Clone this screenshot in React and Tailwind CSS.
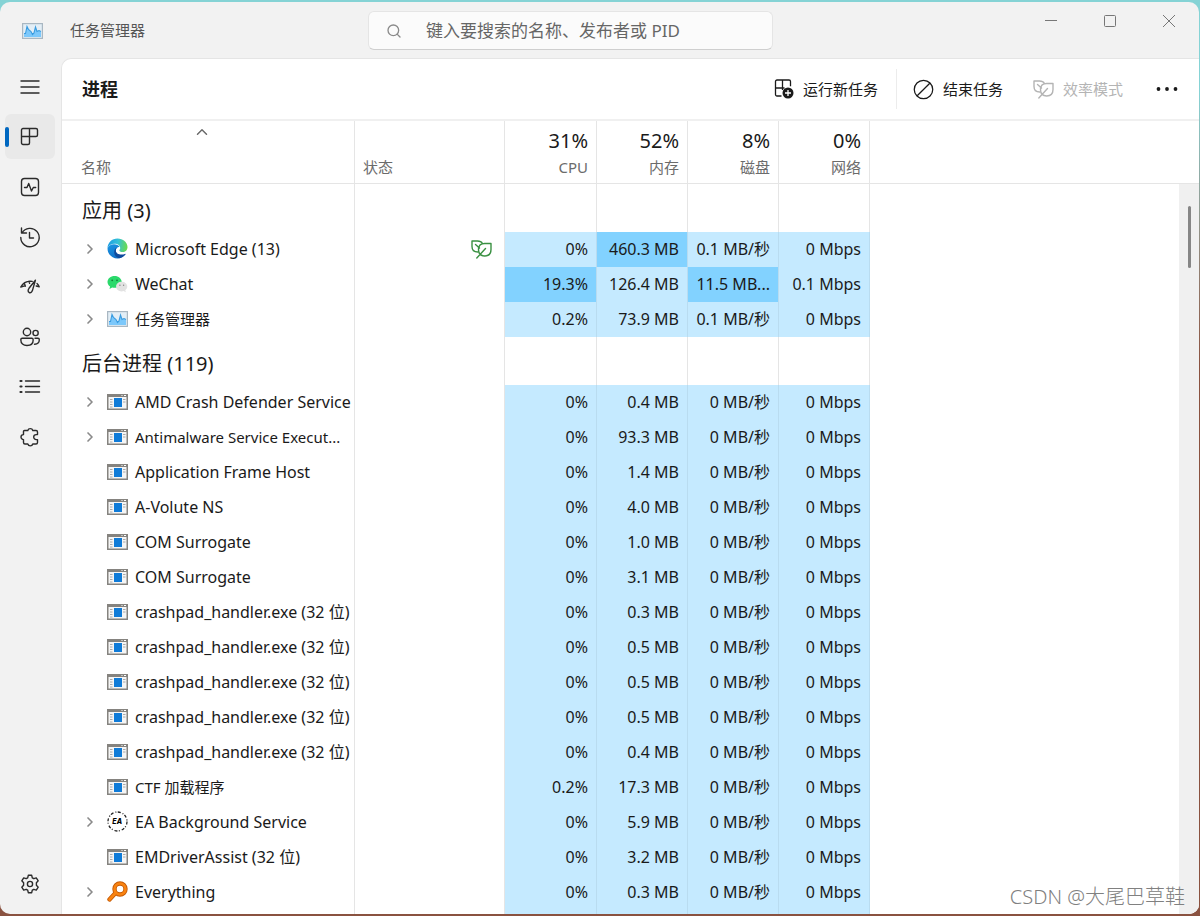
import { Fragment, useState } from "react";
import { ChevronRight, ChevronUp, Search } from "lucide-react";

const heat = {
  low: "bg-[#c5eaff]",
  high: "bg-[#82d2ff]",
};

const apps = [
  { name: "Microsoft Edge (13)", icon: "edge", open: true, eco: true, cpu: "0%", mem: "460.3 MB", disk: "0.1 MB/秒", net: "0 Mbps", hot: ["mem"] },
  { name: "WeChat", icon: "wechat", open: true, cpu: "19.3%", mem: "126.4 MB", disk: "11.5 MB...", net: "0.1 Mbps", hot: ["cpu", "disk"] },
  { name: "任务管理器", icon: "taskmgr", small: true, open: true, cpu: "0.2%", mem: "73.9 MB", disk: "0.1 MB/秒", net: "0 Mbps" },
];

const idle = { cpu: "0%", disk: "0 MB/秒", net: "0 Mbps", icon: "exe" };

const background = [
  { ...idle, name: "AMD Crash Defender Service", open: true, mem: "0.4 MB" },
  { ...idle, name: "Antimalware Service Execut...", small: true, open: true, mem: "93.3 MB" },
  { ...idle, name: "Application Frame Host", mem: "1.4 MB" },
  { ...idle, name: "A-Volute NS", mem: "4.0 MB" },
  { ...idle, name: "COM Surrogate", mem: "1.0 MB" },
  { ...idle, name: "COM Surrogate", mem: "3.1 MB" },
  { ...idle, name: "crashpad_handler.exe (32 位)", mem: "0.3 MB" },
  { ...idle, name: "crashpad_handler.exe (32 位)", mem: "0.5 MB" },
  { ...idle, name: "crashpad_handler.exe (32 位)", mem: "0.5 MB" },
  { ...idle, name: "crashpad_handler.exe (32 位)", mem: "0.5 MB" },
  { ...idle, name: "crashpad_handler.exe (32 位)", mem: "0.4 MB" },
  { ...idle, name: "CTF 加载程序", small: true, cpu: "0.2%", mem: "17.3 MB" },
  { ...idle, name: "EA Background Service", icon: "ea", open: true, mem: "5.9 MB" },
  { ...idle, name: "EMDriverAssist (32 位)", mem: "3.2 MB" },
  { ...idle, name: "Everything", icon: "everything", open: true, mem: "0.3 MB" },
];

const groups = [
  { title: "应用 (3)", rows: apps },
  { title: "后台进程 (119)", rows: background },
];

const columns = [
  { key: "cpu", label: "CPU", total: "31%" },
  { key: "mem", label: "内存", total: "52%" },
  { key: "disk", label: "磁盘", total: "8%" },
  { key: "net", label: "网络", total: "0%" },
];

// sidebar glyphs, all on a 20x20 grid
const glyphs = {
  menu: <path d="M1 4h18M1 10h18M1 16h18" />,
  processes: (
    <path d="M3 1.5h13A1.5 1.5 0 0 1 17.5 3v5A1.5 1.5 0 0 1 16 9.5H9.5V16A1.5 1.5 0 0 1 8 17.5H3A1.5 1.5 0 0 1 1.5 16V3A1.5 1.5 0 0 1 3 1.5zM9.5 1.5v8M1.5 9.5h8" />
  ),
  performance: (
    <>
      <rect x="1.5" y="1.5" width="17" height="17" rx="3" />
      <path d="M4.5 10.5H7l1.7-4 2.8 7.500 1.800-3.500h2.400" />
    </>
  ),
  history: <path d="M1.500 1v5h5M2 6A9.200 9.200 0 1 1 .8 10.500M9.500 5.500V11h4" />,
  startup: (
    <>
      <path d="M.8 10C3.200 5.600 7 3.800 12.200 4.400M.8 10l3.800-1.200M4.400 6.400l1 2.800M9 4.200l.6 2.200M17 6.600c.9.8 1.600 1.800 2.200 3.200l-3-.8" />
      <path d="M15.400 3.200 9 11.300c-1.200 1.600-1.200 3.400.2 4.200 1.400.7 2.600-.2 3.200-1.900z" />
    </>
  ),
  users: (
    <>
      <circle cx="7" cy="5" r="3.7" />
      <circle cx="15.6" cy="6" r="2.6" />
      <path d="M2.200 11.300h9.600c.8 0 1.400.6 1.400 1.400 0 3.800-2.500 5.800-6.200 5.800S.8 16.500.8 12.700c0-.8.6-1.400 1.400-1.400zM15 11.300h3c.8 0 1.300.6 1.300 1.400 0 3-1.600 4.600-4.800 4.500" />
    </>
  ),
  details: (
    <>
      <path d="M5.500 4h14M5.500 9.500h14M5.500 15h14" />
      <path d="M.5 4h1M.5 9.500h1M.5 15h1" strokeWidth="2.2" />
    </>
  ),
  services: (
    <path d="M4.500 3.500h3.300a2.600 2.600 0 0 1 5 0H16A1.500 1.500 0 0 1 17.500 5v2.600h-1.300a2.500 2.500 0 0 0 0 5h1.300v2.900A1.500 1.500 0 0 1 16 17h-3.200a2.600 2.600 0 0 1-5 0H5A1.500 1.500 0 0 1 3.500 15.500v-2.900a2.500 2.500 0 0 1 0-5V4.500a1 1 0 0 1 1-1z" />
  ),
  settings: (
    <>
      <circle cx="10" cy="10" r="2.600" />
      <path d="M8.300 1.300h3.400l.6 2.500 1.600.9 2.400-.8 1.900 2.900-1.800 1.900v2.600l1.800 1.900-1.900 2.900-2.400-.8-1.600.9-.6 2.500H8.300l-.6-2.500-1.600-.9-2.400.8-1.900-2.900 1.800-1.900V8.700L1.800 6.800l1.900-2.900 2.400.8 1.600-.9z" />
    </>
  ),
};

function Glyph({ name }) {
  return (
    <svg viewBox="0 0 20 20" className="size-5 overflow-visible" fill="none" stroke="currentColor" strokeWidth="1.4" strokeLinejoin="round" strokeLinecap="round">
      {glyphs[name]}
    </svg>
  );
}

function LeafIcon() {
  return (
    <svg viewBox="0 0 21 19" className="h-[19px] w-[21px]" fill="none" stroke="currentColor" strokeWidth="1.4" strokeLinejoin="round" strokeLinecap="round">
      <path d="M11.500 3.500C10.500 1.800 8.700 1 6.500 1H1v5.500C1 10 3 12 6.800 12M4.500 4.500l4 3.500" />
      <path d="M20 3.500h-6.400c-3.900 0-6.100 2.300-6.100 6.100 0 4 2.300 6.400 6.200 6.400 4 0 6.300-2.400 6.300-6.400zM14.500 8.500 5.800 18" />
    </svg>
  );
}

function TaskManagerIcon() {
  return (
    <svg viewBox="0 0 21 16" className="h-4 w-[21px]">
      <rect x=".6" y=".6" width="19.800" height="14.800" fill="#e3eef6" stroke="#a9b7c2" strokeWidth="1.200" />
      <path d="M2 14v-3.500h1.500L5 3.500l1.500 3L9 8.500l1.500 3L12 10l1.500-6 1.500 4.500 2-1 2 1V14z" fill="#7cc8fb" />
      <path d="M2 10.500h1.500L5 3.500l1.500 3L9 8.500l1.500 3L12 10l1.500-6 1.500 4.500 2-1 2 1" fill="none" stroke="#3a9ce0" strokeWidth="1.100" />
    </svg>
  );
}

function ExeIcon() {
  return (
    <svg viewBox="0 0 21 16" className="h-4 w-[21px]">
      <rect x=".75" y=".75" width="19.500" height="14.500" fill="#f5f5f5" stroke="#85837f" strokeWidth="1.500" />
      <path d="M0 0h21v3H0z" fill="#85837f" />
      <path d="M14.500 1.500h1M17 1.500h2" stroke="#fff" />
      <path d="M3 5.500h2.500M3 8h2.500M3 10.500h2.500M3 13h2.500M16 5.500h2.500M16 8h2.500" stroke="#aaa" />
      <path d="M7 4h8v9H7z" fill="#0f7bd8" />
    </svg>
  );
}

function EdgeIcon() {
  return (
    <svg viewBox="0 0 21 21" className="size-[21px]">
      <defs>
        <linearGradient id="edgeTop" x1="0" y1=".4" x2="1" y2=".5">
          <stop offset="0" stopColor="#1b9de2" />
          <stop offset=".5" stopColor="#35c1d8" />
          <stop offset="1" stopColor="#6bdc4a" />
        </linearGradient>
        <linearGradient id="edgeSide" x1="0" y1="0" x2=".6" y2="1">
          <stop offset="0" stopColor="#1b97e4" />
          <stop offset="1" stopColor="#0f6cc4" />
        </linearGradient>
      </defs>
      <path d="M.5 10.500C.5 4.500 5 .5 10.500.5s10 4 10 8.500c0 3-2 5-5 5-2 0-3.200-.7-3.200-1.500 0-.6.9-1 .9-2.500 0-2.300-2.200-4.300-5.700-4.300-3.500 0-6 2-7 4.800z" fill="url(#edgeTop)" />
      <path d="M.5 10.500C1.300 8 3.600 6.200 7 6.200c2.600 0 4.600 1 5.500 2.500-2.300.2-3.700 1.800-3.700 3.800 0 2.900 2.600 5.500 9.200 4.300-1.900 2.400-4.500 3.700-7.500 3.700-5.500 0-10-4.500-10-10z" fill="url(#edgeSide)" />
      <path d="M10.300 9.300C8.600 10 7.200 11.600 7.200 14c0 3 1.900 5.400 4.800 6.300 2.700-.4 4.900-1.700 6.500-3.700.3-.5-.1-1-.6-.7-1.100.5-2.300.7-3.600.7-3.300 0-5.500-1.700-5.500-4.100 0-1.300.5-2.500 1.500-3.200z" fill="#0f4a9c" />
    </svg>
  );
}

function WeChatIcon() {
  return (
    <svg viewBox="0 0 21 18" className="h-[18px] w-[21px]">
      <path d="M7.600 1C3.600 1 .5 3.600.5 7c0 1.900 1 3.500 2.600 4.600L2.500 14l2.700-1.500c.8.200 1.600.3 2.400.3 4 0 7.100-2.500 7.100-5.800S11.600 1 7.600 1z" fill="#2bd96b" />
      <circle cx="5.200" cy="5.300" r=".9" fill="#11813a" />
      <circle cx="10" cy="5.300" r=".9" fill="#11813a" />
      <path d="M14.700 6.800c-3.200 0-5.600 2.100-5.600 4.800s2.400 4.800 5.600 4.800c.7 0 1.300-.1 1.900-.3l2.200 1.100-.5-2c1.300-.9 2-2.100 2-3.600 0-2.700-2.400-4.800-5.600-4.800z" fill="#e2e2e2" />
      <circle cx="12.900" cy="10.300" r=".7" fill="#888" />
      <circle cx="16.600" cy="10.300" r=".7" fill="#888" />
    </svg>
  );
}

function EaIcon() {
  return (
    <svg viewBox="0 0 21 21" className="size-[21px]">
      <circle cx="10.500" cy="10.500" r="9.500" fill="none" stroke="#222" strokeWidth="1.300" strokeDasharray="3 2 1 1.460" />
      <text x="10.200" y="13" textAnchor="middle" fontSize="7" fontWeight="800" fontStyle="italic" fontFamily="Inter, sans-serif">EA</text>
    </svg>
  );
}

function EverythingIcon() {
  return (
    <svg viewBox="0 0 21 21" className="size-[21px]">
      <path d="M2.500 18.500 8 12.500" stroke="#c45a06" strokeWidth="4.400" strokeLinecap="round" />
      <circle cx="13" cy="8" r="5.500" fill="#fff" stroke="#c45a06" strokeWidth="4.400" />
      <path d="M2.500 18.500 8 12.500" stroke="#f98310" strokeWidth="2.600" strokeLinecap="round" />
      <circle cx="13" cy="8" r="5.500" fill="none" stroke="#f98310" strokeWidth="2.600" />
    </svg>
  );
}

const processIcons = {
  edge: EdgeIcon,
  wechat: WeChatIcon,
  taskmgr: TaskManagerIcon,
  exe: ExeIcon,
  ea: EaIcon,
  everything: EverythingIcon,
};

function TitleBar() {
  return (
    <header className="flex h-14 shrink-0 items-start">
      <div className="flex h-full w-[368px] items-center gap-[27px] pl-[22px] pt-px text-[15px] text-[#555]">
        <TaskManagerIcon />
        <span>任务管理器</span>
      </div>
      <label className="mt-[9px] flex h-[39px] w-[405px] items-center gap-6 rounded-md border border-[#e5e5e5] border-b-[#cfcfcf] bg-[#fbfbfb] pl-[17px]">
        <Search size={16} strokeWidth={2} className="shrink-0 text-[#8a8a8a]" />
        <input
          aria-label="搜索"
          placeholder="键入要搜索的名称、发布者或 PID"
          className="min-w-0 flex-1 bg-transparent text-[17px] outline-none placeholder:text-[#666]"
        />
      </label>
      <div className="ml-auto flex pr-px text-[#777]">
        <button aria-label="最小化" className="flex h-[38px] w-[59px] items-center justify-center">
          <svg viewBox="0 0 12 12" className="size-3" stroke="currentColor"><path d="M0 5.500h12" /></svg>
        </button>
        <button aria-label="最大化" className="flex h-[38px] w-[59px] items-center justify-center">
          <svg viewBox="0 0 12 12" className="size-3" fill="none" stroke="currentColor"><rect x=".5" y=".5" width="11" height="11" rx="1" /></svg>
        </button>
        <button aria-label="关闭" className="flex h-[38px] w-[59px] items-center justify-center">
          <svg viewBox="0 0 12 12" className="size-3" stroke="currentColor"><path d="M0 0l12 12M12 0 0 12" /></svg>
        </button>
      </div>
    </header>
  );
}

const navItems = [
  { id: "processes", label: "进程" },
  { id: "performance", label: "性能" },
  { id: "history", label: "应用历史记录" },
  { id: "startup", label: "启动应用" },
  { id: "users", label: "用户" },
  { id: "details", label: "详细信息" },
  { id: "services", label: "服务" },
];

function Sidebar({ active, onSelect }) {
  return (
    <nav className="flex w-[61px] shrink-0 flex-col gap-[5px] pb-2 pl-[5px] pt-[6px] text-[#2b2b2b]">
      <button aria-label="菜单" className="flex h-[45px] w-[50px] items-center justify-center">
        <Glyph name="menu" />
      </button>
      {navItems.map((item) => (
        <button
          key={item.id}
          aria-label={item.label}
          onClick={() => onSelect(item.id)}
          className={`relative flex h-[45px] w-[50px] items-center justify-center rounded-md ${active === item.id ? "bg-[#e9e9e9]" : ""}`}
        >
          {active === item.id && <span className="absolute left-0 h-5 w-1 rounded-full bg-[#0067c0]" />}
          <Glyph name={item.id} />
        </button>
      ))}
      <button aria-label="设置" className="mt-auto flex h-[45px] w-[50px] items-center justify-center">
        <Glyph name="settings" />
      </button>
    </nav>
  );
}

function Toolbar() {
  return (
    <div className="flex h-[62px] shrink-0 items-center border-b-2 border-[#f0f0f0] pl-5 text-[15px] text-[#1a1a1a]">
      <h1 className="mr-auto text-lg font-bold">进程</h1>
      <button className="flex h-10 items-center gap-[9px] border-r border-[#ececec] pr-[18px]">
        <svg viewBox="0 0 20 20" className="size-5 overflow-visible" fill="none" stroke="currentColor" strokeWidth="1.300">
          <path d="M7.500 17H3a1.500 1.500 0 0 1-1.500-1.500v-13A1.500 1.500 0 0 1 3 1h12a1.500 1.500 0 0 1 1.500 1.500v4.800M8.500 1v10M1.500 9h9" />
          <circle cx="14" cy="14" r="5.500" fill="#1a1a1a" stroke="none" />
          <path d="M14 11v6M11 14h6" stroke="#fff" />
        </svg>
        运行新任务
      </button>
      <button className="flex h-10 items-center gap-[9px] pl-4">
        <svg viewBox="0 0 20 20" className="size-[21px]" fill="none" stroke="currentColor" strokeWidth="1.200">
          <circle cx="10" cy="10" r="8.800" />
          <path d="M4 16 16 4" />
        </svg>
        结束任务
      </button>
      <button disabled className="ml-[30px] flex h-10 items-center gap-[9px] text-[#b4b4b4]">
        <LeafIcon />
        效率模式
      </button>
      <button aria-label="更多" className="ml-6 mr-3 flex h-10 w-10 items-center justify-center">
        <svg viewBox="0 0 22 4" className="h-1 w-[22px]" fill="currentColor">
          <circle cx="2.500" cy="2" r="1.900" />
          <circle cx="11" cy="2" r="1.900" />
          <circle cx="19.500" cy="2" r="1.900" />
        </svg>
      </button>
    </div>
  );
}

function ProcessRow({ row }) {
  const Icon = processIcons[row.icon];
  return (
    <tr className="h-[35px]">
      <td className="border-r border-[#e5e5e5] p-0 pb-0.5">
        <div className="flex items-center whitespace-nowrap pl-5">
          <span className="mr-[10px] flex w-[15px] justify-center">
            {row.open && (
              <button aria-label={`展开 ${row.name}`}>
                <ChevronRight size={16} strokeWidth={2.5} className="text-[#8a8a8a]" />
              </button>
            )}
          </span>
          <Icon />
          <span className={`ml-[7px] ${row.small ? "text-[15px]" : ""}`}>{row.name}</span>
        </div>
      </td>
      <td className="border-r border-[#e5e5e5] p-0">
        {row.eco && (
          <div className="flex justify-end pr-3 text-[#3a9142]">
            <LeafIcon />
          </div>
        )}
      </td>
      {columns.map((col) => (
        <td
          key={col.key}
          className={`whitespace-nowrap border-r border-[#b9dcf0] p-0 pb-0.5 pr-2 text-right ${row.hot?.includes(col.key) ? heat.high : heat.low}`}
        >
          {row[col.key]}
        </td>
      ))}
      <td />
    </tr>
  );
}

function ProcessTable() {
  return (
    <table className="w-full table-fixed border-separate border-spacing-0 text-base leading-5 text-[#1a1a1a]">
      <colgroup>
        <col className="w-[293px]" />
        <col className="w-[150px]" />
        <col className="w-[92px]" />
        <col className="w-[91px]" />
        <col className="w-[91px]" />
        <col className="w-[91px]" />
        <col />
      </colgroup>
      <thead className="text-[15px]">
        <tr className="h-[63px] text-[#6b6b6b]">
          <th className="border-b border-r border-[#e5e5e5] p-0 pb-[6px] align-bottom font-normal">
            <div className="flex h-[54px] flex-col justify-between pl-[19px] text-left">
              <ChevronUp size={18} strokeWidth={2} className="ml-28" />
              <span>名称</span>
            </div>
          </th>
          <th className="border-b border-r border-[#e5e5e5] p-0 pb-[6px] pl-2 text-left align-bottom font-normal">状态</th>
          {columns.map((col) => (
            <th key={col.key} className="border-b border-r border-[#e5e5e5] p-0 pb-[6px] pr-2 text-right align-bottom font-normal">
              <div className="pb-1 text-xl leading-6 text-[#1a1a1a]">{col.total}</div>
              {col.label}
            </th>
          ))}
          <td className="border-b border-[#e5e5e5]" />
        </tr>
      </thead>
      <tbody>
        {groups.map((group) => (
          <Fragment key={group.title}>
            <tr className="h-12">
              <th className="border-r border-[#e5e5e5] p-0 pl-5 pt-[6px] text-left text-xl font-normal leading-6">{group.title}</th>
              <td className="border-r border-[#e5e5e5]" />
              {columns.map((col) => (
                <td key={col.key} className="border-r border-[#e5e5e5]" />
              ))}
              <td />
            </tr>
            {group.rows.map((row, i) => (
              <ProcessRow key={i} row={row} />
            ))}
          </Fragment>
        ))}
        {/* next row, still below the fold */}
        <tr className="h-[35px]">
          <td className="border-r border-[#e5e5e5]" />
          <td className="border-r border-[#e5e5e5]" />
          {columns.map((col) => (
            <td key={col.key} className="border-r border-[#b9dcf0] bg-[#c5eaff]" />
          ))}
          <td />
        </tr>
      </tbody>
    </table>
  );
}

export default function App() {
  const [active, setActive] = useState("processes");

  return (
    <div className="h-screen bg-linear-to-b from-[#85d3d5] from-10% to-[#8a5240] to-40% py-[2px] pr-px font-['Noto_Sans','Noto_Sans_CJK_SC',sans-serif]">
      <div className="relative flex h-full flex-col overflow-hidden rounded-[10px] bg-[#f2f2f2]">
        <TitleBar />
        <div className="flex min-h-0 flex-1">
          <Sidebar active={active} onSelect={setActive} />
          <main className="flex min-w-0 flex-1 flex-col overflow-hidden rounded-tl-[10px] border-l border-t border-[#e5e5e5] bg-white">
            <Toolbar />
            <div className="flex min-h-0 flex-1 overflow-hidden">
              <div className="min-w-0 flex-1">
                <ProcessTable />
              </div>
              <div className="flex w-5 flex-col">
                <div className="h-[63px] shrink-0 border-b border-[#e5e5e5]" />
                <div className="flex-1 bg-[#f0f0f0] pl-[9px] pt-[22px]">
                  <div className="h-[62px] w-[3px] rounded-full bg-[#868686]" />
                </div>
              </div>
            </div>
          </main>
        </div>
        <div className="absolute bottom-[3px] right-[14px] text-xl font-light leading-7 text-[#808080]">CSDN @大尾巴草鞋</div>
      </div>
    </div>
  );
}
